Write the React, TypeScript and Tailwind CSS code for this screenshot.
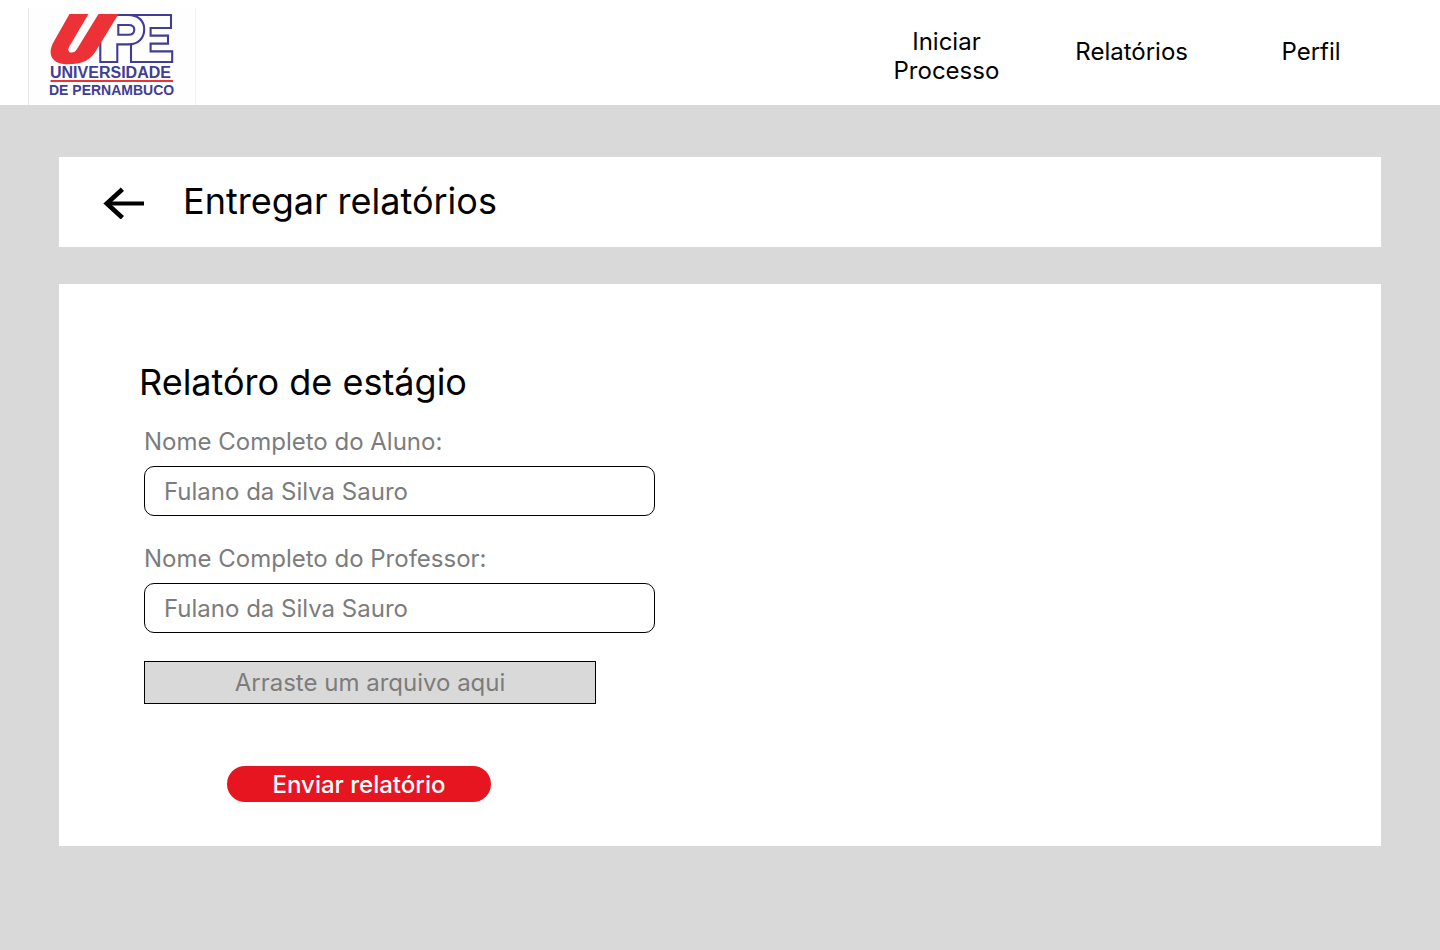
import React from 'react';

function Logo() {
  return (
    <svg
      viewBox="28 8 168 97"
      className="block h-[97px] w-[168px] shrink-0"
      role="img"
      aria-label="Universidade de Pernambuco"
    >
      <rect x="28" y="8" width="168" height="97" fill="#fefefe" />
      <path d="M28.5 8V105" stroke="#e6e6e6" />
      <path d="M195.5 8V105" stroke="#f0f0f0" />
      <g fill="none" stroke="#3f3d94" strokeWidth="2.1">
        <path d="M117 15H128C138 15 144.2 20.5 144.2 29.3C144.2 38.4 138 44.4 128.5 44.4H117.3V62H100.3V42" />
        <path d="M118.3 25H128.5C132.3 25 134.3 26.7 134.3 29.8C134.3 33 132.3 34.8 128.5 34.8H118.3Z" />
        <path d="M128 15H171V28H150.6V35.6H168V43.6H150.6V51.4H172.2V62H131V44.4" />
      </g>
      <path
        d="M69.5 14H88.5L69.3 46.5C67 50.5 69 52.6 71.6 52.6C74 52.6 75.6 51.3 77 49L98.5 14H118.5L96.5 50C90.5 60 82.5 64.3 67.5 64.3C52 64.3 47.2 54.5 53 43Z"
        fill="#ec3237"
      />
      <g fill="#3f3d94" fontFamily="'Liberation Sans', Arial, sans-serif" fontWeight="700">
        <text x="50" y="78" fontSize="16">UNIVERSIDADE</text>
        <text x="49" y="95" fontSize="14">DE PERNAMBUCO</text>
      </g>
      <path d="M50.5 81H173" stroke="#ec3237" strokeWidth="2" />
    </svg>
  );
}

function BackArrow() {
  return (
    <svg viewBox="0 0 42 32" className="block h-8 w-[42px]" fill="none" stroke="#000" aria-hidden="true">
      <path d="M3 16.5H41" strokeWidth="4" />
      <path d="M19.4 2.2L3.8 16.5L19.4 30.8" strokeWidth="4.6" />
    </svg>
  );
}

function Field({ id, label }: { id: string; label: string }) {
  return (
    <div className="flex flex-col gap-[10px]">
      <label htmlFor={id} className="text-[#7c7c7c]">
        {label}
      </label>
      <input
        id={id}
        type="text"
        placeholder="Fulano da Silva Sauro"
        className="h-[50px] w-full rounded-[10px] border border-black bg-white px-[19px] text-black placeholder:text-[#7c7c7c]"
      />
    </div>
  );
}

export default function App() {
  return (
    <div className="flex min-h-screen flex-col bg-[#d9d9d9] font-['Inter',sans-serif] text-[24px] leading-[29px] text-black">
      <header className="flex items-center justify-between bg-white pr-[82px] pl-7">
        <div className="pt-2">
          <Logo />
        </div>
        <nav className="flex items-center gap-[76px] pb-0.5 text-center">
          <a href="#iniciar" className="pt-2">
            Iniciar
            <br />
            Processo
          </a>
          <a href="#relatorios">Relatórios</a>
          <a href="#perfil" className="w-[94px]">
            Perfil
          </a>
        </nav>
      </header>

      <main className="flex flex-col gap-[37px] px-[59px] pt-[52px] pb-[104px]">
        <section className="flex items-start gap-[38px] bg-white px-11 pt-[22px] pb-6">
          <button type="button" aria-label="Voltar" className="mt-2">
            <BackArrow />
          </button>
          <h1 className="text-[36px] leading-[44px]">Entregar relatórios</h1>
        </section>

        <section className="bg-white px-20 pt-[76px] pb-11">
          <h2 className="text-[36px] leading-[44px]">Relatóro de estágio</h2>
          <form className="mt-[23px] ml-[5px] flex max-w-[511px] flex-col gap-7">
            <Field id="aluno" label="Nome Completo do Aluno:" />
            <Field id="professor" label="Nome Completo do Professor:" />
            <label className="relative flex h-[43px] w-[452px] items-center justify-center border border-black bg-[#d9d9d9] text-[#7c7c7c]">
              Arraste um arquivo aqui
              <input type="file" className="sr-only" />
            </label>
            <button
              type="button"
              className="mt-[34px] ml-[83px] h-9 w-[264px] rounded-full bg-[#e71520] font-medium text-white"
            >
              Enviar relatório
            </button>
          </form>
        </section>
      </main>
    </div>
  );
}
